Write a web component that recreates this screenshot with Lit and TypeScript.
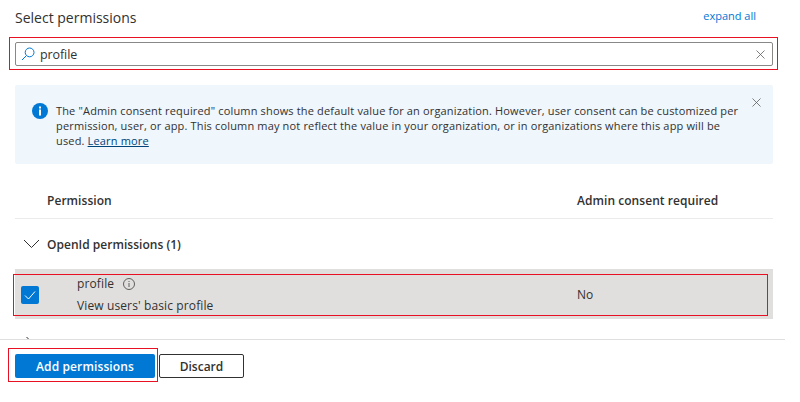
import { LitElement, html, css } from "lit";
import { customElement } from "lit/decorators.js";

@customElement("app-root")
export class AppRoot extends LitElement {
  static styles = css`
    :host { display: block; width: 800px; height: 402px; overflow: hidden; background: #fff; color: #323130;
      font-family: "Open Sans", "Noto Sans", sans-serif; font-size: 12px; }
    * { box-sizing: border-box; }
    .page { display: flex; flex-direction: column; height: 402px; width: 785px; }
    .content { height: 339px; padding: 0 12px 0 15px; overflow: hidden; display: flex; flex-direction: column; }
    .title-row { display: flex; justify-content: space-between; height: 37px; }
    .title { font-size: 14px; line-height: 20px; margin-top: 8px; letter-spacing: 0; }
    .expand { color: #0078d4; font-size: 11px; line-height: 16px; margin: 8px 17px 0 0; letter-spacing: 0; }
    .search-box { margin: 0 -5px 0 -6px; height: 33px; border: 1px solid #e81123; padding: 4px 4px 3px 5px; }
    .search { height: 24px; border: 1px solid #8a8886; border-radius: 2px; display: flex; align-items: center; padding: 0 7px 0 5px; }
    .search svg.mag { width: 14px; height: 14px; margin-right: 5px; }
    .search span { flex: 1; font-size: 12.5px; letter-spacing: -0.1px; color: #323130; }
    .search svg.x { width: 9px; height: 9px; }
    .info { position: relative; margin-top: 15px; height: 79px; background: #eff6fc; border-radius: 2px; display: flex; padding: 18px 16px 0 17px; }
    .info svg.i { width: 16px; height: 16px; flex: none; margin: 0 8px 0 0; }
    .info p { margin: 0; font-size: 11px; line-height: 15px; letter-spacing: 0.16px; white-space: nowrap; width: 700px; }
    .info a { color: #004578; text-decoration: underline; }
    .info svg.close { position: absolute; right: 12px; top: 13px; width: 9px; height: 9px; }
    .head { margin-top: 21px; height: 34px; border-bottom: 1px solid #edebe9; display: grid; grid-template-columns: 530px 1fr; padding-left: 32px; font-weight: 600; font-size: 12px; line-height: 32px; letter-spacing: 0.05px; }
    .group { height: 50px; display: flex; align-items: center; padding: 0 0 0 8px; font-weight: 600; font-size: 12px; letter-spacing: 0.02px; }
    .group svg { width: 17px; height: 10px; margin-right: 7px; }
    .row { position: relative; flex: none; height: 50px; background: #e1dfdd; display: grid; grid-template-columns: 62px 500px 1fr; align-items: center; }
    .row::after { content: ""; position: absolute; left: -2px; right: 5px; top: 5px; bottom: 3px; border: 1px solid #e81123; }
    .check { width: 18px; height: 18px; background: #0078d4; border-radius: 2px; margin: 2px 0 0 6px; display: flex; align-items: center; justify-content: center; }
    .check svg { width: 12px; height: 12px; }
    .name { display: flex; flex-direction: column; gap: 6px; padding-top: 2px; line-height: 16px; letter-spacing: 0.12px; }
    .name div { display: flex; align-items: center; gap: 9px; }
    .name svg { width: 12px; height: 12px; }
    .no { padding-top: 0; letter-spacing: 0; }
    .next { height: 10px; padding: 18px 0 0 11px; }
    .next svg { display: block; width: 6px; height: 4px; }
    .footer { border-top: 1px solid #e1dfdd; display: flex; padding: 14px 0 0 15px; gap: 4px; }
    .btn { height: 24px; border-radius: 2px; display: flex; align-items: center; justify-content: center; font-weight: 600; font-size: 12px; letter-spacing: 0.12px; }
    .primary { position: relative; width: 140px; background: #0078d4; color: #fff; }
    .primary::after { content: ""; position: absolute; left: -7px; right: -3px; top: -6px; bottom: -4px; border: 1px solid #e81123; }
    .secondary { width: 85px; background: #fff; border: 1px solid #323130; letter-spacing: 0; }
  `;

  render() {
    return html`<div class="page">
      <div class="content">
        <div class="title-row"><div class="title">Select permissions</div><div class="expand">expand all</div></div>
        <div class="search-box"><div class="search">
          <svg class="mag" viewBox="0 0 14 14" fill="none" stroke="#0078d4" stroke-width="1"><circle cx="8.6" cy="5.4" r="4.4"/><path d="M5.4 8.6 L1 13"/></svg>
          <span>profile</span>
          <svg class="x" viewBox="0 0 9 9" stroke="#605e5c" stroke-width="0.8" fill="none"><path d="M.5 .5 L8.5 8.5 M8.5 .5 L.5 8.5"/></svg>
        </div></div>
        <div class="info">
          <svg class="i" viewBox="0 0 16 16"><circle cx="8" cy="8" r="8" fill="#0078d4"/><rect x="7" y="6.5" width="2" height="6" fill="#fff"/><rect x="7" y="3.5" width="2" height="2" fill="#fff"/></svg>
          <p>The "Admin consent required" column shows the default value for an organization. However, user consent can be customized per<br>permission, user, or app. This column may not reflect the value in your organization, or in organizations where this app will be<br>used. <a>Learn more</a></p>
          <svg class="close" viewBox="0 0 9 9" stroke="#605e5c" stroke-width="0.8" fill="none"><path d="M.5 .5 L8.5 8.5 M8.5 .5 L.5 8.5"/></svg>
        </div>
        <div class="head"><div>Permission</div><div>Admin consent required</div></div>
        <div class="group">
          <svg viewBox="0 0 17 10" fill="none" stroke="#323130" stroke-width="1"><path d="M1 1 L8.5 8.5 L16 1"/></svg>
          OpenId permissions (1)
        </div>
        <div class="row">
          <div class="check"><svg viewBox="0 0 12 12" fill="none" stroke="#fff" stroke-width="1"><path d="M1 6.5 L4.5 10 L11 2.5"/></svg></div>
          <div class="name">
            <div>profile <svg viewBox="0 0 12 12" fill="none" stroke="#605e5c" stroke-width="1"><circle cx="6" cy="6" r="5.5"/><path d="M6 5 V9 M6 3 V4"/></svg></div>
            <span>View users' basic profile</span>
          </div>
          <div class="no">No</div>
        </div>
        <div class="next"><svg viewBox="0 0 6 4" fill="none" stroke="#323130" stroke-width="1"><path d="M0.5 0 L4 3.5"/></svg></div>
      </div>
      <div class="footer">
        <div class="btn primary">Add permissions</div>
        <div class="btn secondary">Discard</div>
      </div>
    </div>`;
  }
}
